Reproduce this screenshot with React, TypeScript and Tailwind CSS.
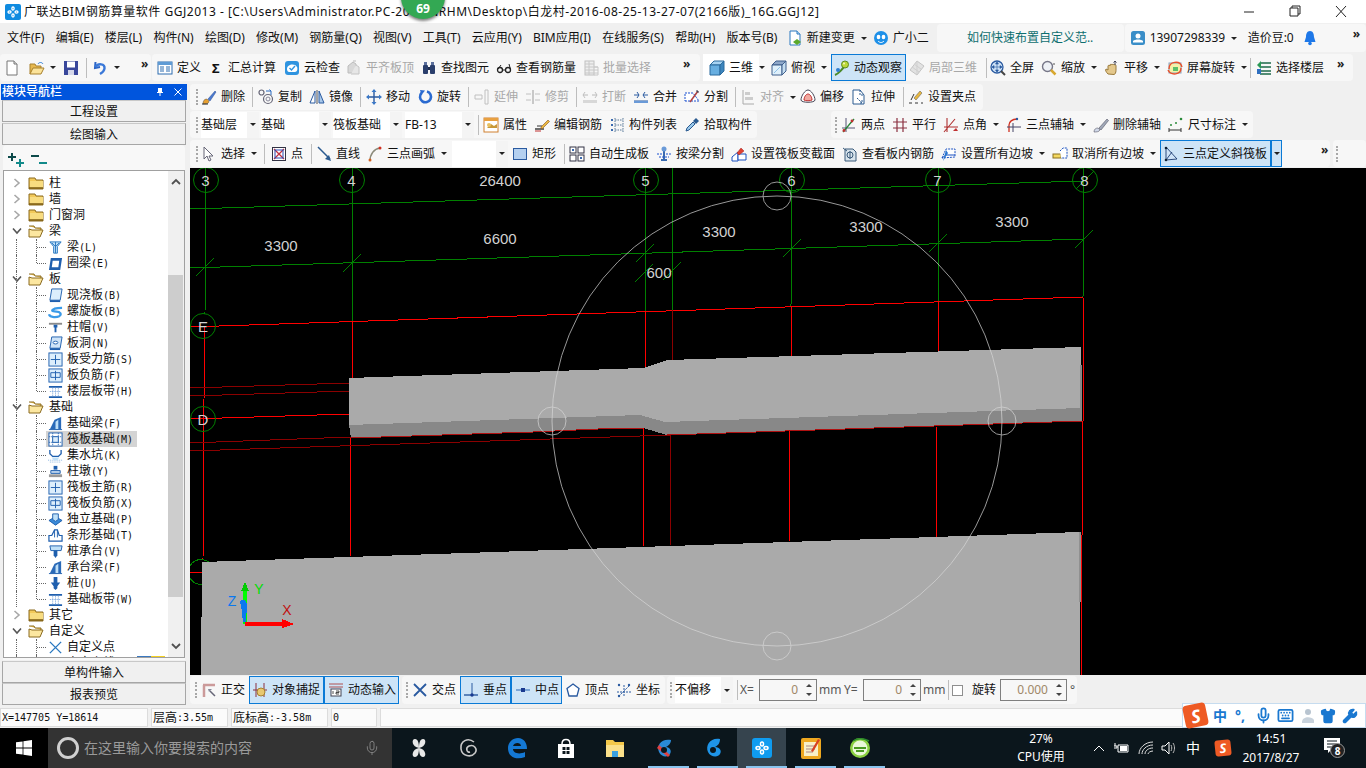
import React from 'react';
import clsx from 'clsx';
import { Keyboard, Mic, Shirt, Wrench } from 'lucide-react';

const ic: Record<string, React.ReactNode> = {
    file: (<><path d="M3 1h7l3 3v11H3z" fill="#fff" stroke="#777" /><path d="M10 1v3h3" fill="#ddd" stroke="#777" /></>),
    open: (<><path d="M1 14V4h5l1 2h5v2" fill="#e6b84f" stroke="#a8812e" /><path d="M1 14l3-6h11l-3 6z" fill="#fbe39a" stroke="#a8812e" /><path d="M9 4c1-2 4-2 5 0" stroke="#2f7ed8" fill="none" /></>),
    save: (<><path d="M1 1h14v14H1z" fill="#39479b" /><rect x="4" y="1.500" width="8" height="6" fill="#fff" /><rect x="5" y="10" width="6" height="5" fill="#d5d8ea" /></>),
    undo: (<><path d="M3.500 2 3 8l5-1" fill="none" stroke="#2a63c4" strokeWidth="2" /><path d="M3.500 7C6 3 13 3.500 12.500 8.500c-.3 2.500-2 4-4.500 5.500" stroke="#3a78d8" strokeWidth="2.400" fill="none" /></>),
    def: (<><rect x="1" y="2" width="14" height="12" fill="#fff" stroke="#2d6db0" /><rect x="1" y="2" width="14" height="3" fill="#5f9bd5" /><path d="M3 7h4M3 9h4M3 11h4M9 7h4M9 9h4M9 11h4" stroke="#2d6db0" /></>),
    cloud: (<><rect x="1" y="1" width="14" height="14" rx="3" fill="#2f94e0" /><path d="M3 9c0-5 8-6 10-2 1 2 0 5-2 5H5c-1 0-2-1-2-3z" fill="#fff" /><path d="M5.500 8l2 2 3.500-4" stroke="#2f94e0" strokeWidth="1.400" fill="none" /></>),
    alignOff: (<><path d="M2 6l5-4 3 2v9H2z" fill="#d8d8d8" stroke="#bcbcbc" /><path d="M5 14h8V7l-3-2" fill="#e6e6e6" stroke="#c4c4c4" /><path d="M7 1h3" stroke="#bbb" /></>),
    find: (<><rect x="2" y="5" width="5" height="9" rx="1" fill="#2b3f6c" /><rect x="9" y="5" width="5" height="9" rx="1" fill="#2b3f6c" /><rect x="3" y="2" width="3" height="3" fill="#5b6f9c" /><rect x="10" y="2" width="3" height="3" fill="#5b6f9c" /><rect x="7" y="7" width="2" height="3" fill="#1d2b4c" /></>),
    glasses: (<><circle cx="4" cy="10" r="2.500" fill="none" stroke="#222" strokeWidth="1.300" /><circle cx="12" cy="10" r="2.500" fill="none" stroke="#222" strokeWidth="1.300" /><path d="M6.500 10h3M13 4l1.500 5.500M5 5 2 9" stroke="#222" fill="none" /></>),
    batchOff: (<><rect x="2" y="1" width="9" height="14" fill="#eee" stroke="#c0c0c0" /><path d="M2 4h9M2 7h13M2 10h13M2 13h13M6 1v14M11 7h4v8h-4" stroke="#c8c8c8" fill="none" /></>),
    cube: (<><path d="M5 1h10l-4 4H1z" fill="#a7d3f2" stroke="#2b6b9e" /><path d="M1 5h10v10H1z" fill="#67aee0" stroke="#2b6b9e" /><path d="M11 5l4-4v10l-4 4z" fill="#3c85bd" stroke="#2b6b9e" /></>),
    glass: (<><path d="M5 1h10l-4 4H1z" fill="#8fa8c9" stroke="#3f5f8c" /><path d="M1 5h10v10H1z" fill="#dff0fb" stroke="#3f5f8c" /><path d="M11 5l4-4v10l-4 4z" fill="#c5ddf0" stroke="#3f5f8c" /><path d="M3 13 9 7" stroke="#8fc1e8" /></>),
    orbit: (<><path d="M1 15C4 14 9 9 11 5" stroke="#4a8a2a" strokeWidth="2" fill="none" /><circle cx="11" cy="4.500" r="3.500" fill="#bcd83a" stroke="#5a8a20" /><circle cx="10" cy="3.500" r="1" fill="#f5f8c0" /><circle cx="4" cy="10" r="2" fill="#2d7ed0" /></>),
    localOff: (<><path d="M8 1l7 5-7 9-7-5z" fill="#e2e2e2" stroke="#c4c4c4" /><path d="M5 4l7 5M3 7l7 5M8 1v14" stroke="#cfcfcf" /></>),
    full: (<><circle cx="7" cy="7" r="6" fill="#cfe3f7" stroke="#2a5aa0" strokeWidth="1.300" /><path d="M7 2v10M2 7h10M7 2 5.500 4h3zM7 12l-1.500-2h3zM2 7l2-1.500v3zM12 7l-2-1.500v3z" stroke="#2a5aa0" fill="#2a5aa0" strokeWidth=".6" /><path d="M11 11l4 4" stroke="#444" strokeWidth="2" /></>),
    zoom: (<><circle cx="6.500" cy="6.500" r="5" fill="#eef1f6" stroke="#778" strokeWidth="1.400" /><path d="M10 10l4.500 4.500" stroke="#d8a830" strokeWidth="2.500" /><path d="M13 3v2" stroke="#555" /></>),
    pan: (<><path d="M4 14c-2-2-3-4-2-5l2 1V6c0-1 2-1 2 0V5c0-1 2-1 2 0 0-1 2-1 2 0 0-.5 2-.5 2 .5v5c0 2-1 4-2 4z" fill="#e4c88c" stroke="#9a7a3c" /><path d="M11 1v4M9.500 2.500 11 1l1.500 1.500" stroke="#445" fill="none" /></>),
    turn: (<><rect x="2" y="3" width="12" height="10" fill="#f6f0a8" stroke="#8aa0c0" /><path d="M2 9c0-8 11-9 13-2M14 8c0 7-10 8-13 2" fill="none" stroke="#e8502a" strokeWidth="1.400" /><rect x="6" y="7" width="5" height="4" fill="#5cc06a" /></>),
    floors: (<><path d="M4 3h11M4 7h11M4 11h11M4 14h11" stroke="#1d6a4a" strokeWidth="1.500" /><path d="M1 5l4-4v8z" fill="#2a9a55" /><rect x="1" y="9" width="4" height="5" fill="#2e6fc0" /></>),
    brush: (<><path d="M2 15c0-3 1-5 4-5l2 2c0 3-3 3-6 3z" fill="#e8a030" stroke="#555" strokeWidth=".5" /><path d="M7 10l7-8 1 1-6 9z" fill="#4a7ad0" stroke="#2a4a90" strokeWidth=".5" /><path d="M1 15h6" stroke="#333" /></>),
    copy: (<><circle cx="3.500" cy="3.500" r="2.500" fill="none" stroke="#667" strokeWidth="1.200" /><circle cx="10" cy="10" r="4.500" fill="none" stroke="#667" strokeWidth="1.200" /><circle cx="10" cy="10" r="2" fill="none" stroke="#889" /><path d="M8 2h5l-1.500-1.500M13 2v4" stroke="#2a6ac0" fill="none" /></>),
    mirror: (<><path d="M6 2v12H1z" fill="#fff" stroke="#2a5aa0" /><path d="M10 2v12h5z" fill="#a8c8ea" stroke="#2a5aa0" /><path d="M8 1v14" stroke="#555" /></>),
    move: (<><path d="M8 1v14M1 8h14" stroke="#2a5aa0" strokeWidth="1.400" /><path d="M8 0 5.500 3h5zM8 16l-2.500-3h5zM0 8l3-2.500v5zM16 8l-3-2.500v5z" fill="#3a78c8" /></>),
    spin: (<><path d="M10 2.500A5.500 5.500 0 1 1 4.500 4" fill="none" stroke="#2a6ad0" strokeWidth="2.600" /><path d="M3 1l5 .5L4.500 6z" fill="#2a6ad0" /></>),
    extendOff: (<><path d="M1 6h7v4H1zM11 1h3v14h-3z" fill="none" stroke="#c0c0c0" /></>),
    trimOff: (<><path d="M1 5h5M1 11h5M10 5h5M10 11h5" stroke="#c0c0c0" /><rect x="7" y="1" width="2" height="14" fill="#c8c8c8" /></>),
    breakOff: (<><path d="M1 6h5M10 6h5M1 12h14" stroke="#b8b8b8" /><path d="M3 3 1 6l2 3M13 3l2 3-2 3" stroke="#c0c0c0" fill="none" /><path d="M1 14h14v-2H1z" fill="#d8d8d8" /></>),
    merge: (<><path d="M1 6h5M10 6h5M1 12h14" stroke="#2a5aa0" /><path d="M4 3l2 3-2 3M12 3l-2 3 2 3" stroke="#2a5aa0" fill="none" /><path d="M1 14h14v-2H1z" fill="#6a9ad8" /></>),
    split: (<><path d="M1 12h14L9 4H1z" fill="#fff" stroke="#1a50d0" strokeDasharray="2 1" /><path d="M6 13 14 2" stroke="#b04040" strokeWidth="1.500" /><path d="M13 1l2 2-1 1-2-2z" fill="#445" /></>),
    alignOff2: (<><path d="M3 1v14M3 15h11" stroke="#aaa" /><rect x="5" y="3" width="5" height="3" fill="#ccc" /><rect x="5" y="8" width="8" height="3" fill="#ccc" /></>),
    offset: (<><path d="M8 1c3 0 7 6 7 10 0 3-14 3-14 0C1 7 5 1 8 1z" fill="#fff" stroke="#445" /><path d="M8 5c2 0 4 3 4 6-1 1-7 1-8 0 0-3 2-6 4-6z" fill="#f0a8a0" stroke="#c03030" /></>),
    stretch: (<><path d="M2 1h7l4 5v9H2z" fill="#fff" stroke="#2a5a90" /><path d="M9 1v5h4M6 9l5 5M11 11v3H8" stroke="#2a5a90" strokeDasharray="2 1" fill="none" /></>),
    grip: (<><path d="M1 14h3M7 14h3M13 14h2M3 11 6 5" stroke="#333" /><path d="M6 9l6-7 2 2-6 7z" fill="#e8b840" stroke="#555" strokeWidth=".5" /></>),
    attr: (<><rect x="1" y="1" width="14" height="14" fill="#fff" stroke="#d08030" /><rect x="1" y="1" width="14" height="3" fill="#e8a040" /><path d="M4 11l4-4 3 2 3-2v4z" fill="#c89838" /><circle cx="6" cy="8" r="2" fill="#e8c060" /></>),
    edit: (<><path d="M1 12h9" stroke="#333" strokeWidth="1.400" /><path d="M3 9h5" stroke="#333" /><path d="M7 10l7-7 1.500 1.500-7 7H7z" fill="#e8b840" stroke="#8a5020" strokeWidth=".6" /><path d="M1 14h6" stroke="#c03030" /></>),
    list: (<><path d="M2 2h2v2H2zM2 7h2v2H2zM2 12h2v2H2z" fill="#3a6ab0" /><path d="M6 3h8M6 8h8M6 13h8M6 1v14M14 1v14" stroke="#5a7a9a" strokeDasharray="1.500 1" /></>),
    pick: (<><path d="M2 14l1-3 6-6 2 2-6 6z" fill="#9ac8ea" stroke="#2a5a90" /><path d="M9 4l3-3 3 3-3 3z" fill="#2a5a90" /></>),
    two: (<><path d="M5 1v14M1 11h13M2 15 13 2" stroke="#446" strokeWidth=".9" /><path d="M2 15 13 2" stroke="#2a8a3a" strokeWidth="1.200" /><circle cx="11" cy="4" r="1.400" fill="#c03030" /><circle cx="3" cy="13.500" r="1.400" fill="#c03030" /></>),
    para: (<><path d="M5 1v14M11 1v14M1 5h14M1 11h14" stroke="#8a3040" strokeWidth="1.200" /></>),
    angle: (<><path d="M4 1v14M1 10h14M1 15 12 2" stroke="#b03030" strokeWidth="1.100" /><path d="M10 14l3-3 2 3z" fill="#c03030" /></>),
    arc3: (<><path d="M3 15V8c0-3 3-6 8-6" fill="none" stroke="#d03020" strokeWidth="1.300" /><path d="M1 10h14M7 6v9" stroke="#446" /><circle cx="11" cy="2" r="1.200" fill="#2a5aa0" /></>),
    brush2: (<><path d="M1 15c0-3 2-4 4-4l2 2c-1 2-4 2-6 2z" fill="#d0d8e8" stroke="#556" strokeWidth=".6" /><path d="M6 11l8-9 1.500 1.500L8 13z" fill="#a0a8b8" stroke="#556" strokeWidth=".6" /></>),
    dim: (<><path d="M1 13h12M1 11v4M13 11v4" stroke="#333" /><circle cx="3" cy="8" r="1" fill="#2a8a3a" /><circle cx="8" cy="6" r="1" fill="#2a8a3a" /><circle cx="13" cy="2" r="1.300" fill="#2a8a3a" /></>),
    cursor: (<path d="M3 1v12l3-3 2 5 2-1-2-4h4z" fill="#fff" stroke="#667" />),
    point: (<><rect x="1.500" y="1.500" width="13" height="13" fill="#fff" stroke="#334" /><path d="M3 3l10 10M13 3 3 13" stroke="#c03040" strokeWidth="1.300" /><rect x="4" y="4" width="8" height="8" fill="none" stroke="#2a4ab0" /></>),
    line: (<><path d="M2 1l12 12" stroke="#2a5a90" strokeWidth="1.500" /><path d="M15 15l-6-2 4-4z" fill="#2a5a90" /></>),
    arc: (<><path d="M3 15C3 8 7 3 13 2" fill="none" stroke="#8a8a7a" strokeWidth="1.400" /><circle cx="13" cy="2" r="1.500" fill="#d03020" /><circle cx="3" cy="14" r="1.500" fill="#d06020" /></>),
    rect: (<rect x="1.500" y="2.500" width="13" height="11" fill="#b4d0f0" stroke="#2a5aa0" />),
    auto: (<><rect x="1" y="1" width="6" height="6" fill="#fff" stroke="#334" /><rect x="9" y="1" width="6" height="6" fill="#fff" stroke="#334" /><rect x="1" y="9" width="6" height="6" fill="#fff" stroke="#334" /><rect x="9" y="9" width="6" height="6" fill="#fff" stroke="#334" /><rect x="3" y="3" width="2" height="2" fill="#3a6ab0" /><rect x="11" y="11" width="2" height="2" fill="#3a6ab0" /></>),
    beam: (<><path d="M1 8h14" stroke="#1a50d0" strokeDasharray="2 1" /><path d="M5 13h6v2H5zM7 3h2v10H7z" fill="#3a6ab0" /><circle cx="8" cy="3" r="2.500" fill="#6a9ad8" /><path d="M3 11h10" stroke="#1a50d0" strokeDasharray="2 1" /></>),
    vary: (<><path d="M1 11l6-5v9H1z" fill="#fff" stroke="#1a50c0" /><path d="M7 8h8v6H7z" fill="#fff" stroke="#1a50c0" /><path d="M6 7l4-5 3 3-5 4z" fill="#e04030" stroke="#a02020" strokeWidth=".5" /></>),
    look: (<><path d="M3 3h8l3 3v9H3z" fill="#d8e4ec" stroke="#3a5a7a" /><circle cx="8" cy="9" r="3" fill="none" stroke="#3a5a7a" /><path d="M8 5v8M1 2l4 3" stroke="#3a5a7a" /></>),
    slope: (<><path d="M1 12 5 3h9v8z" fill="#fff" stroke="#1a50c0" strokeDasharray="2 1" /><path d="M1 12l4-3h9" fill="none" stroke="#1a50c0" /><path d="M2 15 5 4l2 3z" fill="#2a78d0" /></>),
    unslope: (<><rect x="1" y="8" width="8" height="4" fill="#f4d860" stroke="#8a7020" /><path d="M8 5l3-3h4v10h-6" fill="#fff" stroke="#1a50c0" strokeDasharray="2 1" /></>),
    tri: (<><path d="M3 1v13l11-1z" fill="#cfe4f8" stroke="#1a3a70" strokeWidth=".9" /><path d="M3 14 9 6" stroke="#1a3a70" strokeWidth=".9" /><circle cx="3" cy="2" r="1.300" fill="#123" /><circle cx="3" cy="14" r="1.300" fill="#123" /></>),
    ortho: (<><path d="M2 3h12M3 3v12" stroke="#cc9a9a" strokeWidth="2.500" /><path d="M9 9l5 5" stroke="#667" strokeWidth="1.500" /><path d="M7 7h4l-3 3z" fill="#889" /></>),
    snap: (<><path d="M4 1v14M12 1v14M1 8h14" stroke="#8a3040" /><circle cx="9" cy="10" r="4" fill="#e8c870" stroke="#a88030" /></>),
    input: (<><path d="M1 2h14M1 5h14" stroke="#b05050" /><rect x="3" y="7" width="10" height="7" fill="#fff" stroke="#445" /><path d="M5 9v3M8 9h3v1.500H8V12h3" stroke="#222" fill="none" strokeWidth=".8" /></>),
    cross: (<path d="M2 2l12 12M14 2 2 14" stroke="#2a5aa0" strokeWidth="1.800" />),
    perp: (<><path d="M9 1v12" stroke="#2a5aa0" /><path d="M1 13h14" stroke="#2a5aa0" strokeWidth="1.400" /><circle cx="9" cy="13" r="1.700" fill="#1a3a90" /></>),
    mid: (<><path d="M1 8h14" stroke="#5a8ac8" strokeWidth="1.400" /><rect x="6" y="6" width="4" height="4" fill="#1a3a90" /></>),
    vertex: (<path d="M8 2l6 4.500-2 7.500H4L2 6.500z" fill="#fff" stroke="#2a5aa0" strokeWidth="1.300" />),
    coord: (<><path d="M8 3v12M1 10h14M3 14 13 4" stroke="#2a5aa0" strokeDasharray="2 1" /><circle cx="3" cy="3" r="1.200" fill="#2a5aa0" /><circle cx="13" cy="3" r="1.200" fill="#2a5aa0" /><circle cx="3" cy="14" r="1.200" fill="#2a5aa0" /></>),
    page: (<><path d="M3 1h7l3 3v11H3z" fill="#fff" stroke="#2a78c0" /><path d="M10 1v3h3" fill="#bfe0f5" stroke="#2a78c0" /><path d="M10 9l4 3-4 3-4-3z" fill="#5aa82a" /></>),
    mascot: (<><circle cx="8" cy="8" r="7" fill="#1e90e8" /><ellipse cx="5.500" cy="7" rx="1.800" ry="2.300" fill="#fff" /><ellipse cx="10.500" cy="7" rx="1.800" ry="2.300" fill="#fff" /><path d="M5 11c2 2 4 2 6 0" stroke="#fff" fill="none" /></>),
    user: (<><rect x="1" y="1" width="14" height="14" rx="2.500" fill="#3a8ec8" /><circle cx="8" cy="6" r="2.500" fill="#fff" /><path d="M3 12.500h10V11c-2-2-8-2-10 0z" fill="#fff" /></>),
    bell: (<><path d="M8 1c3 0 4 3 4 6l1.500 5h-11L4 7c0-3 1-6 4-6z" fill="#1e78e8" /><circle cx="8" cy="13.500" r="1.800" fill="#1e78e8" /></>),
    plus: (<><path d="M0 5h8M4 1v8" stroke="#0d4a4a" strokeWidth="2" /><path d="M8 11h8M12 7v8" stroke="#128a8a" strokeWidth="2" /></>),
    minus: (<><path d="M0 4h8" stroke="#0d4a4a" strokeWidth="2" /><path d="M8 11h8" stroke="#128a8a" strokeWidth="2" /></>),
    folder: (<><path d="M1 3h6l1 2h7v9H1z" fill="#f2c95a" stroke="#8a6a20" /><path d="M2 6h13v7H2z" fill="#f8dc80" /><path d="M1 13h14" stroke="#7a5a10" strokeWidth="1.500" /></>),
    folderOpen: (<><path d="M1 3h5l1 2h6v2" fill="#f2c95a" stroke="#8a6a20" /><path d="M1 14V6l3 1h11l-3 7z" fill="#fce7a0" stroke="#8a6a20" /></>),
    tBeam: (<><path d="M2 2h12l-4 5v7H6V7z" fill="#bfe0f8" stroke="#2a78c0" /><path d="M8 2v12M4 3l4 4 4-4" stroke="#2a78c0" fill="none" /></>),
    tRing: (<><path d="M3 2h12l-2 13H1z" fill="#1f5fae" /><path d="M5 5h7l-1 7H4z" fill="#fff" /></>),
    tSlab: (<><path d="M4 1h11l-2 12H2z" fill="#dceefc" stroke="#1f5fae" /><path d="M2 13h11v2H2z" fill="#1f5fae" /></>),
    tSpiral: (<><path d="M1 11c1 4 9 3 11 2 3-2 1-5-3-5-5 0-6-1-2-3 3-1 6-1 8-1" fill="none" stroke="#3a9ae8" strokeWidth="2.400" /></>),
    tCap: (<><path d="M1 3h14v2H1z" fill="#8a8a8a" /><path d="M6 5h4v3H9v5H7V8H6z" fill="#1f5fae" /></>),
    tHole: (<><path d="M4 1h11l-2 12H2z" fill="#cfe4f8" stroke="#1f5fae" /><path d="M2 13h11v2H2z" fill="#1f5fae" /><ellipse cx="8" cy="7" rx="2.500" ry="1.500" fill="#fff" stroke="#1f5fae" /></>),
    tGrid: (<><rect x="1" y="1" width="14" height="14" fill="#dceefc" stroke="#1f5fae" /><path d="M8 3v10M3 8h10" stroke="#1f5fae" /></>),
    tNeg: (<><rect x="1" y="1" width="14" height="14" fill="#dceefc" stroke="#1f5fae" /><path d="M3 5h10v5H3zM8 3v10" stroke="#1f5fae" fill="none" /></>),
    tBand: (<><path d="M1 2h14v2H1zM1 13h14v2H1z" fill="#1f5fae" /><path d="M5 4v9M8 4v9M11 4v9M2 8h12" stroke="#6a9ad8" strokeDasharray="1 1" /></>),
    tFound: (<><path d="M2 14l5-10 7-3v13z" fill="#2a6ab8" /><path d="M8 14V6l3-2v10z" fill="#bfe0f8" /><path d="M1 14h14v1H1z" fill="#1f5fae" /></>),
    tRaft: (<><rect x="1" y="1" width="14" height="14" fill="#fff" stroke="#1f5fae" /><path d="M1 5h14M1 11h14M5 1v14M11 1v14" stroke="#1f5fae" strokeDasharray="1 1" /><rect x="5" y="5" width="6" height="6" fill="#dceefc" stroke="#1f5fae" /></>),
    tPit: (<><path d="M2 2v4l3 3h6l3-3V2" fill="none" stroke="#1f5fae" strokeWidth="1.400" /><path d="M0 13h16M2 15h12" stroke="#8ab4e0" strokeDasharray="1 1" /><path d="M4 10h8l-2 3H6z" fill="#bfe0f8" /></>),
    tPier: (<><path d="M6 2h4v4H6z" fill="#1f5fae" /><path d="M3 7h10v3H3z" fill="#bfd6ee" stroke="#1f5fae" /><path d="M1 11h14v3H1z" fill="#9a9a9a" /></>),
    tInd: (<><path d="M1 9l7-4 7 4-7 5z" fill="#3a8ad8" stroke="#1f5fae" /><path d="M5 2v6l3 2 3-2V2z" fill="#bfe0f8" stroke="#1f5fae" /></>),
    tStrip: (<><path d="M7 2h3l2 6h3v6H1V8h3z" fill="#fff" stroke="#1f5fae" strokeWidth="1.300" /><path d="M7 2v8M10 2v8" stroke="#1f5fae" /></>),
    tCapP: (<><path d="M2 2h13l-1 5H3z" fill="#bfe0f8" stroke="#1f5fae" /><path d="M6 7h4v5l-2 3-2-3z" fill="#1f5fae" /></>),
    tPile: (<><path d="M6 1h4v6h3l-3 4v2l-2 2-2-2v-2L3 7h3z" fill="#1f5fae" /></>),
    tX: (<path d="M2 2l12 12M14 2 2 14" stroke="#2a78c0" strokeWidth="1.500" />),
    tSeg: (<><path d="M2 8h12" stroke="#1f5fae" /><rect x="0" y="6" width="4" height="4" fill="#fff" stroke="#1f5fae" /><rect x="12" y="6" width="4" height="4" fill="#fff" stroke="#1f5fae" /></>),
};

function Ico({ n, className }: { n: string; className?: string }) {
    return (
        <svg viewBox="0 0 16 16" className={clsx('h-4 w-4 shrink-0', className)}>
            {ic[n]}
        </svg>
    );
}

function Caret({ className }: { className?: string }) {
    return <span className={clsx('h-0 w-0 shrink-0 border-x-[3px] border-t-[3px] border-x-transparent border-t-[#222]', className)} />;
}

function Tool({ w, i, t, off, arrow, on, className }: { w: string; i: string; t?: string; off?: boolean; arrow?: boolean; on?: boolean; className?: string }) {
    return (
        <div
            className={clsx(
                'flex h-full shrink-0 items-center gap-[4px]',
                w,
                off && 'text-[#a8a8a8]',
                on && 'bg-[#cde4f7] ring-1 ring-inset ring-[#0a7ad6]',
                className,
            )}
        >
            <Ico n={i} />
            {t && <span className="whitespace-nowrap">{t}</span>}
            {arrow && <Caret className="ml-[2px]" />}
        </div>
    );
}

function Sep({ w }: { w: string }) {
    return (
        <div className={clsx('flex h-full shrink-0 items-center pl-[4px]', w)}>
            <div className="h-[20px] w-px bg-[#bdbdbd]" />
        </div>
    );
}

function Grip({ className }: { className?: string }) {
    return <div className={clsx('h-[16px] w-[5px] shrink-0 border-l-[2px] border-dotted border-[#a8a8a8]', className)} />;
}

function Combo({ w, t, className }: { w: string; t?: string; className?: string }) {
    return (
        <div className={clsx('flex h-[26px] shrink-0 items-center justify-between bg-white', w, className)}>
            <span className="whitespace-nowrap">{t}</span>
            <span className="flex h-full w-[12px] items-center justify-center bg-[#f4f4f4]">
                <Caret />
            </span>
        </div>
    );
}

function More() {
    return <span className="shrink-0 text-[12px] font-bold leading-none text-[#222]">»</span>;
}

function Spin({ v, w }: { v: string; w: string }) {
    return (
        <div className={clsx('flex h-[22px] shrink-0 items-center border border-[#7f7f7f] bg-[#f7f7f7]', w)}>
            <span className="flex-1 pr-[4px] text-right text-[#a08868]">{v}</span>
            <span className="flex h-full w-[14px] flex-col items-center justify-center gap-[6px]">
                <span className="h-0 w-0 border-x-[3px] border-b-[3px] border-x-transparent border-b-[#444]" />
                <span className="h-0 w-0 border-x-[3px] border-t-[3px] border-x-transparent border-t-[#444]" />
            </span>
        </div>
    );
}

type Node = { t: string; k?: string; i?: string; open?: boolean; shut?: boolean; guide?: boolean; last?: boolean; sel?: boolean; extra?: boolean };

const tree: Node[] = [
    { t: '柱', shut: true },
    { t: '墙', shut: true },
    { t: '门窗洞', shut: true },
    { t: '梁', open: true },
    { t: '梁', k: '(L)', i: 'tBeam' },
    { t: '圈梁', k: '(E)', i: 'tRing', last: true },
    { t: '板', open: true, guide: true },
    { t: '现浇板', k: '(B)', i: 'tSlab' },
    { t: '螺旋板', k: '(B)', i: 'tSpiral' },
    { t: '柱帽', k: '(V)', i: 'tCap' },
    { t: '板洞', k: '(N)', i: 'tHole' },
    { t: '板受力筋', k: '(S)', i: 'tGrid' },
    { t: '板负筋', k: '(F)', i: 'tNeg' },
    { t: '楼层板带', k: '(H)', i: 'tBand', last: true },
    { t: '基础', open: true, guide: true },
    { t: '基础梁', k: '(F)', i: 'tFound' },
    { t: '筏板基础', k: '(M)', i: 'tRaft', sel: true },
    { t: '集水坑', k: '(K)', i: 'tPit' },
    { t: '柱墩', k: '(Y)', i: 'tPier' },
    { t: '筏板主筋', k: '(R)', i: 'tGrid' },
    { t: '筏板负筋', k: '(X)', i: 'tNeg' },
    { t: '独立基础', k: '(P)', i: 'tInd' },
    { t: '条形基础', k: '(T)', i: 'tStrip' },
    { t: '桩承台', k: '(V)', i: 'tCapP' },
    { t: '承台梁', k: '(F)', i: 'tFound' },
    { t: '桩', k: '(U)', i: 'tPile' },
    { t: '基础板带', k: '(W)', i: 'tBand', last: true },
    { t: '其它', shut: true },
    { t: '自定义', open: true },
    { t: '自定义点', i: 'tX' },
    { t: '自定义线', k: '(X)', i: 'tSeg', extra: true },
];

function TreeRow({ n }: { n: Node }) {
    const child = !!n.i;
    return (
        <div className="relative flex h-[16px] shrink-0 items-center whitespace-nowrap">
            {(child || n.guide) && <span className="absolute left-[12px] top-0 h-full border-l border-dotted border-[#666]" />}
            {child && (
                <>
                    <span className={clsx('absolute left-[32px] top-0 border-l border-dotted border-[#666]', n.last ? 'h-[8px]' : 'h-full')} />
                    <span className="absolute left-[33px] top-[8px] w-[9px] border-t border-dotted border-[#666]" />
                </>
            )}
            {child ? (
                <div className={clsx('ml-[42px] flex h-full items-center gap-[4px] pr-[4px] pl-[2px]', n.sel && 'bg-[#d4d4d4]')}>
                    <Ico n={n.i!} className="h-[15px] w-[15px]" />
                    <span>
                        {n.t}
                        <span className="font-['DejaVu_Sans_Mono',monospace] text-[10px]">{n.k}</span>
                    </span>
                    {n.extra && (
                        <>
                            <span className="h-[14px] w-[14px] border border-[#3a78c0] bg-[#dceefc]" />
                            <span className="h-[14px] w-[14px] -ml-[4px] bg-[#f4d020]" />
                        </>
                    )}
                </div>
            ) : (
                <>
                    <span className="flex w-[24px] justify-center pl-[1px]">
                        {n.shut ? (
                            <svg viewBox="0 0 8 10" className="h-[10px] w-[8px]"><path d="M1.500 1 6 5l-4.500 4" fill="none" stroke="#a8a8a8" strokeWidth="1.600" /></svg>
                        ) : (
                            <svg viewBox="0 0 10 8" className="h-[8px] w-[10px]"><path d="M1 1.500 5 6l4-4.500" fill="none" stroke="#555" strokeWidth="1.600" /></svg>
                        )}
                    </span>
                    <Ico n={n.shut ? 'folder' : 'folderOpen'} />
                    <span className="ml-[5px]">{n.t}</span>
                </>
            )}
        </div>
    );
}

function SideButton({ t, className }: { t: string; className?: string }) {
    return <div className={clsx('flex h-[22px] items-center justify-center border border-[#a6a6a6] border-t-[#c8c8c8] bg-[#f0f0f0] pt-[2px]', className)}>{t}</div>;
}

function Canvas() {
    const axes = [
        { x: 206, t: '3' },
        { x: 352, t: '4' },
        { x: 646, t: '5' },
        { x: 792, t: '6' },
        { x: 938, t: '7' },
        { x: 1085, t: '8' },
    ];
    const ticks = [[205, 267], [352, 263], [645, 253], [792, 248], [938, 243], [1084, 239], [644, 273], [672, 271], [1085, 180]];
    const dims = [[500, 186, '26400'], [281, 251, '3300'], [500, 244, '6600'], [719, 237, '3300'], [866, 232, '3300'], [1012, 227, '3300'], [659, 278, '600']];
    return (
        <svg viewBox="190 168 1176 507" className="block h-full w-full">
            <g shapeRendering="crispEdges" fill="none">
                <g stroke="#008000">
                    <path d="M190 209 1083 181M190 268 1083 239" />
                    <path d="M206 168 205 314M352 168V322M645 168V312M672 168V310M792 168 791 306M938 168V302M1084 168 1083 298" />
                </g>
                <g stroke="#ff0000">
                    <path d="M190 327 1083 297" />
                    <path d="M205 326 204 400 203 560M352 322V378M350 437V556M645 312V368M643 428V546M791 306V356M789 431V541M938 302V351M936 427V538M1083 298V421M1082 421V535" />
                    <path d="M190 419 349 414" />
                    <path d="M1081 535V675" />
                </g>
                <g stroke="#8b0000">
                    <path d="M672 310V360M670 435V545" />
                    <path d="M190 388 349 383M190 396 349 391M190 443 351 437M190 451 670 435" />
                </g>
            </g>
            <g shapeRendering="crispEdges">
                <polygon points="349,425 351,438 533,432 620,428 643,428 667,435 1082,421 1081,408 665,422 640,415" fill="#888888" />
                <polygon points="349,378 643,368 668,360 1081,347 1081,408 665,422 640,415 349,425" fill="#aaaaaa" />
                <path d="M351 438 533 432 620 428 643 428M667 435 1082 421" stroke="#b01010" fill="none" />
                <polygon points="1080,365 1082,365 1082,421 1080,421" fill="#888888" />
                <circle cx="201" cy="572" r="12.500" fill="none" stroke="#008000" />
                <path d="M190 572H205" stroke="#ff0000" />
                <polygon points="202,562 1080,532 1080,675 201,675" fill="#aaaaaa" />
                <rect x="1079" y="532" width="2" height="70" fill="#909090" />
            </g>
            {axes.map(a => (
                <circle key={a.t} cx={a.x} cy={180} r={12.500} fill="none" stroke="#008000" />
            ))}
            <circle cx={203} cy={326} r={12.500} fill="none" stroke="#008000" />
            <circle cx={203} cy={419} r={12.500} fill="none" stroke="#008000" />
            {ticks.map(([x, y]) => (
                <line key={`${x}-${y}`} x1={x - 9} y1={y + 9} x2={x + 9} y2={y - 9} stroke="#008000" />
            ))}
            <g fill="#d2d2d2" fontFamily="Liberation Sans, sans-serif" fontSize="15" textAnchor="middle">
                {axes.map(a => (
                    <text key={a.t} x={a.x - 0.500} y={186}>{a.t}</text>
                ))}
                <text x={203} y={332}>E</text>
                <text x={203} y={425}>D</text>
                {dims.map(([x, y, t]) => (
                    <text key={`${x}`} x={x} y={y}>{t}</text>
                ))}
            </g>
            <g fill="none" stroke="#d8d8d8" opacity="0.700">
                <circle cx={777} cy={421} r={225} />
                <circle cx={777} cy={196} r={14} />
                <circle cx={552} cy={421} r={14} />
                <circle cx={1002} cy={421} r={14} />
                <circle cx={777} cy={646} r={14} />
            </g>
            <g shapeRendering="crispEdges">
                <rect x="243" y="590" width="4" height="34" fill="#00ff00" />
                <polygon points="245,582 241,591 249,591" fill="#00cc00" />
                <path d="M241 605 240 603 241 600H245L247 604 246 622H243Z" fill="#0a78ee" />
                <rect x="245" y="622" width="38" height="4" fill="#ff0000" />
                <polygon points="282,619 294,624 282,628" fill="#ff0000" />
            </g>
            <g fontFamily="Liberation Sans, sans-serif" fontSize="14" textAnchor="middle">
                <text x={259} y={594} fill="#00dd00">Y</text>
                <text x={232} y={606} fill="#0a78ee">Z</text>
                <text x={287} y={615} fill="#c01010">X</text>
            </g>
        </svg>
    );
}

export default function App() {
    return (
        <div className="relative h-[768px] w-[1366px] overflow-hidden bg-[#f0f0f0] font-['Noto_Sans','Noto_Sans_CJK_SC',sans-serif] text-[12px] leading-[16px] text-[#111]">
            {/* title bar */}
            <div className="flex h-[23px] items-center bg-white pl-[5px]">
                <svg viewBox="0 0 16 16" className="h-[16px] w-[16px] shrink-0">
                    <rect width="16" height="16" rx="2" fill="#0f8be0" />
                    <path d="M8 3c-1.500 0-1.500 3 0 3s1.500-3 0-3M8 10c-1.500 0-1.500 3 0 3s1.500-3 0-3M3 8c0-1.500 3-1.500 3 0s-3 1.500-3 0M10 8c0-1.500 3-1.500 3 0s-3 1.500-3 0" fill="none" stroke="#fff" strokeWidth="1.300" />
                </svg>
                <span className="ml-[3px] whitespace-nowrap tracking-[0.51px]">广联达BIM钢筋算量软件 GGJ2013 - [C:\Users\Administrator.PC-2014-NRHM\Desktop\白龙村-2016-08-25-13-27-07(2166版)_16G.GGJ12]</span>
                <div className="ml-auto flex h-full items-center pr-[2px]">
                    <svg viewBox="0 0 46 23" className="h-[23px] w-[46px]"><path d="M18 12h10" stroke="#222" /></svg>
                    <svg viewBox="0 0 46 23" className="h-[23px] w-[46px]"><path d="M18 8h8v8h-8zM20 8V6h8v8h-2" fill="none" stroke="#222" /></svg>
                    <svg viewBox="0 0 46 23" className="h-[23px] w-[46px]"><path d="M18 6l10 11M28 6 18 17" fill="none" stroke="#222" /></svg>
                </div>
            </div>

            {/* menu bar */}
            <div className="flex h-[30px] items-center pl-[7px]">
                {['文件(F)', '编辑(E)', '楼层(L)', '构件(N)', '绘图(D)', '修改(M)', '钢筋量(Q)', '视图(V)', '工具(T)', '云应用(Y)', 'BIM应用(I)', '在线服务(S)', '帮助(H)', '版本号(B)'].map(m => (
                    <span key={m} className="mr-[11.2px] whitespace-nowrap">{m}</span>
                ))}
                <Tool w="w-[87px]" i="page" t="新建变更" arrow className="ml-[-2px]" />
                <Tool w="w-[48px]" i="mascot" t="广小二" className="ml-[-1px]" />
                <div className="ml-[16px] flex h-[28px] w-[187px] shrink-0 items-center justify-center rounded-sm bg-[#f7f7f7] text-[#0f6f70]">如何快速布置自定义范..</div>
                <div className="ml-px flex h-[28px] flex-1 items-center rounded-sm bg-[#f7f7f7] pl-[5px]">
                    <Tool w="w-[118px]" i="user" t="13907298339" arrow />
                    <span className="whitespace-nowrap">造价豆:0</span>
                    <Ico n="bell" className="ml-[8px]" />
                    <span className="ml-auto mb-[8px] mr-[6px]"><More /></span>
                </div>
            </div>

            {/* top toolbar */}
            <div className="mt-px flex h-[27px] items-center">
                <div className="flex h-full w-[151px] shrink-0 items-center rounded-sm bg-[#f7f7f7] pl-[4px]">
                    <Ico n="file" className="mr-[9px]" />
                    <Ico n="open" />
                    <Caret className="ml-[5px] mr-[7px]" />
                    <Ico n="save" className="mr-[3px]" />
                    <Sep w="w-[10px]" />
                    <Ico n="undo" />
                    <Caret className="ml-[6px]" />
                    <span className="mb-[8px] ml-[21px]"><More /></span>
                </div>
                <div className="ml-px flex h-full w-[548px] shrink-0 items-center rounded-sm bg-[#f7f7f7] pl-[5px]">
                    <Tool w="w-[51px]" i="def" t="定义" />
                    <div className="flex h-full w-[76px] shrink-0 items-center gap-[9px] pl-[4px]">
                        <span className="w-[7px] text-[13px] font-bold">Σ</span>
                        <span>汇总计算</span>
                    </div>
                    <Tool w="w-[62px]" i="cloud" t="云检查" />
                    <Tool w="w-[75px]" i="alignOff" t="平齐板顶" off />
                    <Tool w="w-[75px]" i="find" t="查找图元" />
                    <Tool w="w-[87px]" i="glasses" t="查看钢筋量" />
                    <Tool w="w-[80px]" i="batchOff" t="批量选择" off />
                    <span className="mb-[8px] ml-[20px]"><More /></span>
                </div>
                <div className="ml-[3px] flex h-full w-[650px] shrink-0 items-center rounded-sm bg-[#f7f7f7]">
                    <Tool w="w-[56px]" i="cube" t="三维" className="bg-white pl-[6px]" arrow />
                    <div className="w-[12px] shrink-0" />
                    <Tool w="w-[60px]" i="glass" t="俯视" arrow />
                    <Tool w="w-[75px]" i="orbit" t="动态观察" on className="pl-[3px]" />
                    <Tool w="w-[73px]" i="localOff" t="局部三维" off className="ml-[3px]" />
                    <Sep w="w-[8px]" />
                    <Tool w="w-[51px]" i="full" t="全屏" />
                    <Tool w="w-[63px]" i="zoom" t="缩放" arrow />
                    <Tool w="w-[63px]" i="pan" t="平移" arrow />
                    <Tool w="w-[79px]" i="turn" t="屏幕旋转" arrow />
                    <Sep w="w-[10px]" />
                    <Tool w="w-[80px]" i="floors" t="选择楼层" />
                    <span className="mb-[8px] ml-[1px]"><More /></span>
                </div>
            </div>

            {/* body */}
            <div className="mt-[3px] flex h-[622px]">
                <div className="flex w-[190px] shrink-0 flex-col pl-[1px] pr-[3px]">
                    <div className="flex h-[16px] shrink-0 items-center bg-[#0055dd] pl-[1px] text-white">
                        <span className="font-medium">模块导航栏</span>
                        <svg viewBox="0 0 10 10" className="ml-[93px] h-[10px] w-[10px]"><path d="M3 1h4v4h1v1H5.500v3h-1V6H2V5h1z" fill="#fff" /></svg>
                        <svg viewBox="0 0 10 10" className="ml-[8px] h-[10px] w-[10px]"><path d="M1.500 1.500l7 7M8.500 1.500l-7 7" stroke="#fff" /></svg>
                    </div>
                    <div className="px-px">
                        <SideButton t="工程设置" />
                        <SideButton t="绘图输入" className="mt-px" />
                    </div>
                    <div className="mx-[2px] flex h-[515px] shrink-0 flex-col rounded-t-sm bg-[#f8f8f8] pt-[4px]">
                        <div className="flex h-[21px] shrink-0 items-center gap-[7px] pl-[5px]">
                            <Ico n="plus" />
                            <Ico n="minus" />
                        </div>
                        <div className="flex h-[488px] border border-[#a0a0a0] bg-white">
                            <div className="flex flex-1 flex-col overflow-hidden pt-[4px]">
                                {tree.map(n => (
                                    <TreeRow key={`${n.t}${n.k ?? ''}`} n={n} />
                                ))}
                            </div>
                            <div className="relative w-[16px] shrink-0 bg-[#f0f0f0]">
                                <svg viewBox="0 0 10 8" className="absolute left-[3px] top-[7px] h-[8px] w-[10px]"><path d="M1 6 5 2l4 4" fill="none" stroke="#505050" strokeWidth="1.800" /></svg>
                                <div className="absolute left-0 top-[104px] h-[322px] w-[15px] bg-[#cdcdcd]" />
                                <svg viewBox="0 0 10 8" className="absolute bottom-[7px] left-[3px] h-[8px] w-[10px]"><path d="M1 2l4 4 4-4" fill="none" stroke="#505050" strokeWidth="1.800" /></svg>
                            </div>
                        </div>
                    </div>
                    <div className="mt-px px-px">
                        <SideButton t="单构件输入" />
                        <SideButton t="报表预览" />
                    </div>
                </div>

                <div className="flex min-w-0 flex-1 flex-col">
                    <div className="flex h-[26px] w-[793px] shrink-0 items-center rounded-sm bg-[#f7f7f7] pl-[6px]">
                        <Grip />
                        <Tool w="w-[47px]" i="brush" t="删除" />
                        <Sep w="w-[10px]" />
                        <Tool w="w-[51px]" i="copy" t="复制" />
                        <Tool w="w-[47px]" i="mirror" t="镜像" />
                        <Sep w="w-[10px]" />
                        <Tool w="w-[51px]" i="move" t="移动" />
                        <Tool w="w-[47px]" i="spin" t="旋转" />
                        <Sep w="w-[10px]" />
                        <Tool w="w-[51px]" i="extendOff" t="延伸" off />
                        <Tool w="w-[47px]" i="trimOff" t="修剪" off />
                        <Sep w="w-[10px]" />
                        <Tool w="w-[51px]" i="breakOff" t="打断" off />
                        <Tool w="w-[51px]" i="merge" t="合并" />
                        <Tool w="w-[47px]" i="split" t="分割" />
                        <Sep w="w-[9px]" />
                        <Tool w="w-[60px]" i="alignOff2" t="对齐" off arrow />
                        <Tool w="w-[51px]" i="offset" t="偏移" />
                        <Tool w="w-[48px]" i="stretch" t="拉伸" />
                        <Sep w="w-[9px]" />
                        <Tool w="w-[72px]" i="grip" t="设置夹点" />
                    </div>

                    <div className="mt-px flex h-[27px] shrink-0 items-center">
                        <div className="flex h-full w-[567px] shrink-0 items-center rounded-sm bg-[#f7f7f7] pl-[6px]">
                            <Grip className="w-[3px]" />
                            <Combo w="w-[58px]" t="基础层" />
                            <Combo w="w-[70px]" t="基础" className="ml-[2px]" />
                            <Combo w="w-[69px]" t="筏板基础" className="ml-[2px]" />
                            <Combo w="w-[69px]" t="FB-13" className="ml-[3px]" />
                            <Sep w="w-[9px]" />
                            <Tool w="w-[51px]" i="attr" t="属性" />
                            <Tool w="w-[75px]" i="edit" t="编辑钢筋" />
                            <Tool w="w-[75px]" i="list" t="构件列表" />
                            <Tool w="w-[72px]" i="pick" t="拾取构件" />
                        </div>
                        <div className="ml-[74px] flex h-full w-[422px] shrink-0 items-center rounded-sm bg-[#f7f7f7] pl-[4px]">
                            <Grip className="w-[6px]" />
                            <Tool w="w-[51px]" i="two" t="两点" />
                            <Tool w="w-[51px]" i="para" t="平行" />
                            <Tool w="w-[63px]" i="angle" t="点角" arrow />
                            <Tool w="w-[87px]" i="arc3" t="三点辅轴" arrow />
                            <Tool w="w-[75px]" i="brush2" t="删除辅轴" />
                            <Tool w="w-[82px]" i="dim" t="尺寸标注" arrow />
                        </div>
                    </div>

                    <div className="mt-[2px] flex h-[27px] shrink-0 items-center">
                        <div className="flex h-full w-[1140px] shrink-0 items-center rounded-sm bg-[#f7f7f7] pl-[6px]">
                            <Grip className="w-[4px]" />
                            <Tool w="w-[59px]" i="cursor" t="选择" arrow />
                            <Sep w="w-[11px]" />
                            <Tool w="w-[36px]" i="point" t="点" />
                            <Sep w="w-[9px]" />
                            <Tool w="w-[51px]" i="line" t="直线" />
                            <Tool w="w-[85px]" i="arc" t="三点画弧" arrow />
                            <Combo w="w-[56px]" />
                            <Tool w="w-[48px]" i="rect" t="矩形" className="ml-[4px]" />
                            <Sep w="w-[9px]" />
                            <Tool w="w-[87px]" i="auto" t="自动生成板" />
                            <Tool w="w-[75px]" i="beam" t="按梁分割" />
                            <Tool w="w-[111px]" i="vary" t="设置筏板变截面" />
                            <Tool w="w-[99px]" i="look" t="查看板内钢筋" />
                            <Tool w="w-[111px]" i="slope" t="设置所有边坡" arrow />
                            <Tool w="w-[108px]" i="unslope" t="取消所有边坡" arrow />
                            <Tool w="w-[111px]" i="tri" t="三点定义斜筏板" on className="pl-[3px]" />
                            <div className="flex h-full w-[11px] shrink-0 items-center justify-center bg-[#cde4f7] ring-1 ring-inset ring-[#0a7ad6]">
                                <Caret />
                            </div>
                            <span className="mb-[8px] ml-[39px]"><More /></span>
                        </div>
                        <div className="ml-[3px] flex h-full flex-1 items-center rounded-sm bg-[#f7f7f7] pl-[3px]">
                            <Grip />
                        </div>
                    </div>

                    <div className="mt-px h-[507px] shrink-0 bg-black">
                        <Canvas />
                    </div>

                    <div className="mt-px flex h-[28px] shrink-0 items-center">
                        <div className="flex h-full w-[210px] shrink-0 items-center rounded-sm bg-[#f7f7f7] pl-[5px]">
                            <Grip className="w-[6px]" />
                            <Tool w="w-[48px]" i="ortho" t="正交" />
                            <Tool w="w-[75px]" i="snap" t="对象捕捉" on className="pl-[3px]" />
                            <Tool w="w-[75px]" i="input" t="动态输入" on className="pl-[4px]" />
                        </div>
                        <div className="ml-[2px] flex h-full w-[263px] shrink-0 items-center rounded-sm bg-[#f7f7f7] pl-[4px]">
                            <Grip className="w-[6px]" />
                            <Tool w="w-[48px]" i="cross" t="交点" />
                            <Tool w="w-[51px]" i="perp" t="垂点" on className="pl-[3px]" />
                            <Tool w="w-[51px]" i="mid" t="中点" on className="pl-[4px]" />
                            <Tool w="w-[48px]" i="vertex" t="顶点" className="ml-[3px]" />
                            <Tool w="w-[49px]" i="coord" t="坐标" className="ml-[3px]" />
                        </div>
                        <div className="ml-[2px] flex h-full w-[410px] shrink-0 items-center rounded-sm bg-[#f7f7f7] pl-[3px]">
                            <Grip />
                            <Combo w="w-[58px]" t="不偏移" />
                            <Sep w="w-[7px]" />
                            <span className="w-[19px] shrink-0 text-[#555]">X=</span>
                            <Spin v="0" w="w-[58px]" />
                            <span className="ml-[2px] w-[25px] shrink-0 text-[#555]">mm</span>
                            <span className="w-[19px] shrink-0 text-[#555]">Y=</span>
                            <Spin v="0" w="w-[58px]" />
                            <span className="ml-[2px] w-[21px] shrink-0 text-[#555]">mm</span>
                            <Sep w="w-[8px]" />
                            <span className="h-[11px] w-[11px] shrink-0 border border-[#8f8f8f] bg-white" />
                            <span className="ml-[9px] w-[28px] shrink-0">旋转</span>
                            <Spin v="0.000" w="w-[67px]" />
                            <span className="ml-[3px] text-[#555]">°</span>
                        </div>
                    </div>
                </div>
            </div>

            {/* status bar */}
            <div className="mt-[2px] flex h-[19px] font-['DejaVu_Sans_Mono','Noto_Sans_CJK_SC',monospace] text-[10px]">
                <div className="flex w-[148px] shrink-0 items-center border border-[#dcdcdc] bg-[#fbfbfb] pl-px">X=147705 Y=18614</div>
                <div className="ml-[3px] flex w-[77px] shrink-0 items-center border border-[#dcdcdc] bg-[#fbfbfb] pl-px"><span className="text-[12px]">层高</span>:3.55m</div>
                <div className="ml-[3px] flex w-[97px] shrink-0 items-center border border-[#dcdcdc] bg-[#fbfbfb] pl-px"><span className="text-[12px]">底标高</span>:-3.58m</div>
                <div className="ml-[3px] flex w-[46px] shrink-0 items-center border border-[#dcdcdc] bg-[#fbfbfb] pl-px">0</div>
                <div className="ml-[3px] flex-1 border border-[#dcdcdc] bg-[#fbfbfb]" />
            </div>

            {/* taskbar */}
            <div className="mt-px flex h-[40px] items-center bg-[#0b161c] text-white">
                <div className="flex h-full w-[48px] shrink-0 items-center justify-center bg-black">
                    <svg viewBox="0 0 16 16" className="h-[16px] w-[16px]"><path d="M0 2.300 6.600 1.400v6.200H0zM7.400 1.300 16 0v7.600H7.400zM0 8.400h6.600v6.200L0 13.700zM7.400 8.400H16V16l-8.600-1.300z" fill="#fff" /></svg>
                </div>
                <div className="flex h-full w-[344px] shrink-0 items-center bg-[#333333] pl-[9px]">
                    <span className="h-[22px] w-[22px] shrink-0 rounded-full border-[3px] border-[#d0d0d0]" />
                    <span className="ml-[5px] whitespace-nowrap text-[14px] text-[#9a9a9a]">在这里输入你要搜索的内容</span>
                    <Mic className="ml-auto mr-[12px] h-[18px] w-[16px] text-[#8a8a8a]" strokeWidth={1.300} />
                </div>
                <div className="ml-[2px] flex h-full shrink-0">
                    <TaskIcon>
                        <path d="M11 11C4 10 3 2 7 2c3 0 4 4 4 9zM11 11c7-1 8-9 4-9-3 0-4 4-4 9zM11 11c-7 1-8 9-4 9 3 0 4-4 4-9zM11 11c7 1 8 9 4 9-3 0-4-4-4-9z" fill="#e8e8e8" />
                    </TaskIcon>
                    <TaskIcon>
                        <path d="M17 5C11 0 3 4 4 12c1 7 10 9 14 4 3-4-1-9-6-7-4 2-2 7 1 6" fill="none" stroke="#c8c8c8" strokeWidth="1.600" />
                    </TaskIcon>
                    <TaskIcon>
                        <path d="M2 11C2 5 7 1 12 1c6 0 9 5 9 11H7c0 4 6 6 12 3v5c-8 3-17 1-17-9zm5-2h8c0-4-7-4-8 0z" fill="#1478d4" />
                    </TaskIcon>
                    <TaskIcon>
                        <path d="M3 7h16v14H3z" fill="#fff" />
                        <path d="M7 7c0-6 8-6 8 0" fill="none" stroke="#fff" strokeWidth="1.500" />
                        <path d="M7.500 10h3v3h-3zM11.500 10h3v3h-3zM7.500 14h3v3h-3zM11.500 14h3v3h-3z" fill="#0b161c" />
                    </TaskIcon>
                    <TaskIcon>
                        <path d="M2 3h7l2 2h9v15H2z" fill="#f4c84a" />
                        <path d="M2 8h18v12H2z" fill="#fbe08a" />
                        <path d="M8 20v-6h6v6z" fill="#3aa0e0" />
                    </TaskIcon>
                    <TaskIcon>
                        <path d="M18 3C9 1 3 8 6 15c2 5 9 6 11 2 2-3 0-7-4-7 4-2 5-5 5-7z" fill="#2a8ad8" />
                        <path d="M4 11l11 9 2-2L6 8z" fill="#e04040" />
                        <circle cx="11" cy="13" r="3" fill="#0b161c" />
                    </TaskIcon>
                    <TaskIcon>
                        <path d="M18 2C9 0 3 8 6 15c2 5 10 6 12 2 2-3 0-7-5-7 4-2 5-5 5-8z" fill="#1e94e8" />
                        <circle cx="11" cy="13" r="3" fill="#0b161c" />
                    </TaskIcon>
                    <TaskIcon active>
                        <rect x="1" y="1" width="20" height="20" rx="3" fill="#0f9cf0" />
                        <path d="M11 5c-2 0-2 4 0 4s2-4 0-4M11 13c-2 0-2 4 0 4s2-4 0-4M5 11c0-2 4-2 4 0s-4 2-4 0M13 11c0-2 4-2 4 0s-4 2-4 0" fill="none" stroke="#fff" strokeWidth="1.500" />
                    </TaskIcon>
                    <TaskIcon>
                        <rect x="1" y="1" width="20" height="21" rx="2" fill="#eea820" />
                        <path d="M4 5h14v14H4z" fill="#f8f0c8" />
                        <path d="M6 9h9M6 12h9M6 15h7" stroke="#a88" />
                        <path d="M11 14l7-12 2 1-7 12z" fill="#d84020" />
                    </TaskIcon>
                    <TaskIcon>
                        <circle cx="11" cy="11" r="10" fill="#8ad040" />
                        <circle cx="11" cy="11" r="7.500" fill="#eaf8d8" />
                        <path d="M5 11h12M7 14h8" stroke="#4a9a20" strokeWidth="2" />
                        <path d="M4 4c6-4 12-2 16 0" fill="none" stroke="#2a8a2a" strokeWidth="1.500" />
                    </TaskIcon>
                </div>
                <div className="ml-auto flex h-full shrink-0 items-center">
                    <div className="flex w-[56px] flex-col items-center text-[12px] leading-[18px]">
                        <span>27%</span>
                        <span className="whitespace-nowrap">CPU使用</span>
                    </div>
                    <svg viewBox="0 0 12 8" className="ml-[24px] h-[8px] w-[12px]"><path d="M1 7l5-5 5 5" fill="none" stroke="#fff" /></svg>
                    <svg viewBox="0 0 16 12" className="ml-[8px] h-[12px] w-[16px]"><path d="M5 3h10v7H5zM2 1v3h2v2H1M1 4h1" fill="none" stroke="#fff" /><rect x="7" y="4" width="7" height="5" fill="#fff" /></svg>
                    <svg viewBox="0 0 16 14" className="ml-[9px] h-[14px] w-[16px]"><path d="M1 13C1 7 7 1 15 1M4 13c0-4 4-9 11-9M7 13c0-3 3-6 8-6M10 13c0-1 2-3 5-3" fill="none" stroke="#ddd" /></svg>
                    <svg viewBox="0 0 14 14" className="ml-[7px] h-[14px] w-[14px]"><path d="M1 5h3l4-4v12L4 9H1z" fill="none" stroke="#fff" /><path d="M10 4c1 2 1 4 0 6M12 2c2 3 2 7 0 10" fill="none" stroke="#bbb" /></svg>
                    <span className="ml-[11px] w-[14px] text-[14px]">中</span>
                    <span className="ml-[15px] flex h-[16px] w-[16px] -rotate-6 items-center justify-center rounded-[3px] bg-[#ee5a24] text-[13px] font-bold italic leading-none">S</span>
                    <div className="ml-[5px] flex w-[70px] flex-col items-center text-[12px] leading-[19px]">
                        <span>14:51</span>
                        <span className="whitespace-nowrap">2017/8/27</span>
                    </div>
                    <div className="relative ml-[18px] mr-[20px] h-[24px] w-[22px]">
                        <svg viewBox="0 0 16 16" className="mt-[2px] h-[16px] w-[16px]"><path d="M0 0h16v12H7l-3 3v-3H0z" fill="#fff" /><path d="M3 3h10M3 6h10M3 9h7" stroke="#0b161c" /></svg>
                        <span className="absolute left-[6px] top-[7px] flex h-[15px] w-[15px] items-center justify-center rounded-full border border-[#999] bg-[#222] text-[10px] font-bold leading-none">8</span>
                    </div>
                </div>
            </div>

            {/* badge over the title */}
            <div className="absolute left-[401px] top-[-25px] flex h-[44px] w-[44px] items-end justify-center rounded-full bg-[#33a853] pb-[2px] text-[12px] font-bold text-white shadow-[0_2px_3px_rgba(0,0,0,0.5)]">69</div>

            {/* input method bar over the status line */}
            <div className="absolute left-[1182px] top-[703px] flex h-[25px] w-[184px] items-center border border-[#c6dcef] bg-white text-[#1a78d0]">
                <span className="ml-[1px] flex h-[23px] w-[23px] -rotate-12 items-center justify-center rounded-[4px] bg-[#ee5a24] text-[18px] font-bold italic leading-none text-white">S</span>
                <span className="ml-[6px] text-[14px] font-bold">中</span>
                <span className="ml-[8px] text-[14px] font-bold leading-none">°,</span>
                <Mic className="ml-[10px] h-[17px] w-[17px]" strokeWidth={2.500} />
                <Keyboard className="ml-[5px] h-[17px] w-[17px]" strokeWidth={2.500} />
                <svg viewBox="0 0 16 16" className="ml-[6px] h-[16px] w-[16px]"><circle cx="8" cy="4" r="3" fill="#b8c4d0" /><path d="M2 14c0-6 10-6 12-2v3H2z" fill="#c8d2dc" /></svg>
                <Shirt className="ml-[4px] h-[16px] w-[16px]" fill="#1a78d0" />
                <Wrench className="ml-[6px] h-[16px] w-[16px]" fill="#1a78d0" />
            </div>

            {/* running app underlines */}
            <div className="absolute left-[648px] top-[766px] flex gap-[8px]">
                {['a', 'b', 'c', 'd', 'e'].map(k => (
                    <span key={k} className="h-[2px] w-[41px] bg-[#8ac4ee]" />
                ))}
            </div>
        </div>
    );
}

function TaskIcon({ children, active }: { children: React.ReactNode; active?: boolean }) {
    return (
        <div className={clsx('flex h-full w-[49px] shrink-0 items-center justify-center', active && 'bg-[#36444e]')}>
            <svg viewBox="0 0 22 22" className="h-[22px] w-[22px]">
                {children}
            </svg>
        </div>
    );
}
